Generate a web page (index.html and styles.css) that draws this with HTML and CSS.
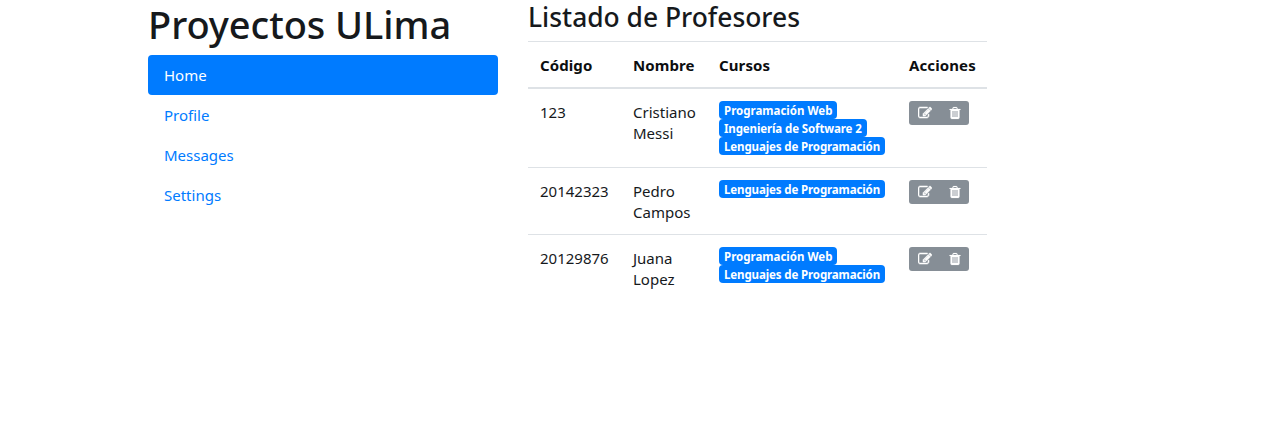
FILE: index.html
```html
<!DOCTYPE html>
<html lang="es">
<head>
<meta charset="utf-8">
<title>Proyectos ULima</title>
<link rel="stylesheet" href="styles.css">
</head>
<body>
<svg class="sprite" width="0" height="0" aria-hidden="true">
<symbol id="edit" viewBox="0 0 1792 1792"><path d="M888 1184l116-116-152-152-116 116v56h96v96h56zm440-720q-16-16-33 1l-350 350q-17 17-1 33t33-1l350-350q17-17 1-33zm80 594v190q0 119-84.5 203.5t-203.5 84.5h-832q-119 0-203.5-84.5t-84.5-203.5v-832q0-119 84.5-203.5t203.5-84.5h832q63 0 117 25 15 7 18 23 3 17-9 29l-49 49q-14 14-32 8-23-6-45-6h-832q-66 0-113 47t-47 113v832q0 66 47 113t113 47h832q66 0 113-47t47-113v-126q0-13 9-22l64-64q15-15 35-7t20 29zm-96-738l288 288-672 672h-288v-288zm444 132l-92 92-288-288 92-92q28-28 68-28t68 28l152 152q28 28 28 68t-28 68z"/></symbol>
<symbol id="trash" viewBox="0 0 1792 1792"><path d="M704 1376v-704q0-14-9-23t-23-9h-64q-14 0-23 9t-9 23v704q0 14 9 23t23 9h64q14 0 23-9t9-23zm256 0v-704q0-14-9-23t-23-9h-64q-14 0-23 9t-9 23v704q0 14 9 23t23 9h64q14 0 23-9t9-23zm256 0v-704q0-14-9-23t-23-9h-64q-14 0-23 9t-9 23v704q0 14 9 23t23 9h64q14 0 23-9t9-23zm-544-992h448l-48-117q-7-9-17-11h-317q-10 2-17 11zm928 32v64q0 14-9 23t-23 9h-96v948q0 83-47 143.5t-113 60.5h-832q-66 0-113-58.5t-47-141.5v-952h-96q-14 0-23-9t-9-23v-64q0-14 9-23t23-9h309l70-167q15-37 54-63t79-26h320q40 0 79 26t54 63l70 167h309q14 0 23 9t9 23z"/></symbol>
</svg>
<div class="container">
<aside class="sidebar">
<h1>Proyectos ULima</h1>
<nav class="nav">
<a class="nav-link active">Home</a>
<a class="nav-link">Profile</a>
<a class="nav-link">Messages</a>
<a class="nav-link">Settings</a>
</nav>
</aside>
<main class="content">
<h3>Listado de Profesores</h3>
<table class="table">
<colgroup><col class="c-code"><col class="c-name"><col class="c-courses"><col class="c-actions"></colgroup>
<thead><tr><th>Código</th><th>Nombre</th><th>Cursos</th><th>Acciones</th></tr></thead>
<tbody>
<tr><td>123</td><td>Cristiano Messi</td>
<td><div class="badges"><span class="badge web">Programación Web</span><span class="badge soft">Ingeniería de Software 2</span><span class="badge lang">Lenguajes de Programación</span></div></td>
<td><div class="btn-group"><button><svg class="icon-edit"><use href="#edit"/></svg></button><button><svg class="icon-trash"><use href="#trash"/></svg></button></div></td></tr>
<tr><td>20142323</td><td>Pedro Campos</td>
<td><div class="badges"><span class="badge lang">Lenguajes de Programación</span></div></td>
<td><div class="btn-group"><button><svg class="icon-edit"><use href="#edit"/></svg></button><button><svg class="icon-trash"><use href="#trash"/></svg></button></div></td></tr>
<tr><td>20129876</td><td>Juana Lopez</td>
<td><div class="badges"><span class="badge web">Programación Web</span><span class="badge lang">Lenguajes de Programación</span></div></td>
<td><div class="btn-group"><button><svg class="icon-edit"><use href="#edit"/></svg></button><button><svg class="icon-trash"><use href="#trash"/></svg></button></div></td></tr>
</tbody>
</table>
</main>
</div>
</body>
</html>
```
FILE: styles.css
```css
* { box-sizing: border-box; }
body { margin: 0; background: #fff; color: #16191c; font: 15px/21px "Noto Sans", "Open Sans", sans-serif; }
.sprite { display: block; }
.container { display: flex; gap: 30px; padding-left: 148px; }
.sidebar { width: 350px; }
h1, h3 { margin: 0; font-weight: 500; white-space: nowrap; color: #16191c; }
h1 { height: 55px; font-size: 38px; line-height: 49px; letter-spacing: -0.05px; }
h3 { height: 41px; font-size: 26.4px; line-height: 34px; }
.nav { display: flex; flex-direction: column; }
.nav-link { height: 40px; padding: 0 16px; line-height: 40px; color: #007bff; border-radius: 4px; }
.nav-link.active { background: #007bff; color: #fff; }
.content { width: 459px; }
.table { width: 459px; table-layout: fixed; border-collapse: separate; border-spacing: 0; }
.c-code { width: 93px; }
.c-name { width: 86px; }
.c-courses { width: 190px; }
.c-actions { width: 90px; }
th, td { padding: 13px 0 11px 12px; text-align: left; vertical-align: top; border-top: 1px solid #dee2e6; }
th { height: 48px; border-bottom: 2px solid #dee2e6; font-weight: 700; letter-spacing: 0.1px; color: #0c0e10; }
tbody tr:first-child td { border-top: 0; }
td:nth-child(2) { padding-right: 10px; }
.badges, .btn-group { margin-top: -1px; }
.badges { display: flex; flex-direction: column; align-items: flex-start; padding-bottom: 1px; }
.badge { height: 18px; padding: 0 5px; border-radius: 4px; background: #007bff; color: #fff; font-size: 11.5px; font-weight: 700; line-height: 19px; letter-spacing: -0.12px; white-space: nowrap; }
.web { width: 118px; letter-spacing: 0; }
.soft { width: 148px; }
.lang { width: 166px; }
.btn-group { display: flex; width: 60px; height: 24px; border-radius: 3px; background: #868e96; overflow: hidden; }
button { display: flex; flex: 1; align-items: center; justify-content: center; padding: 0; border: 0; background: none; color: #fff; }
button svg { width: 14px; height: 14px; fill: currentColor; stroke: currentColor; stroke-width: 70px; overflow: visible; }
.icon-edit { margin-left: 2px; }
.icon-trash { margin-left: 1px; stroke-width: 20px; }
```
